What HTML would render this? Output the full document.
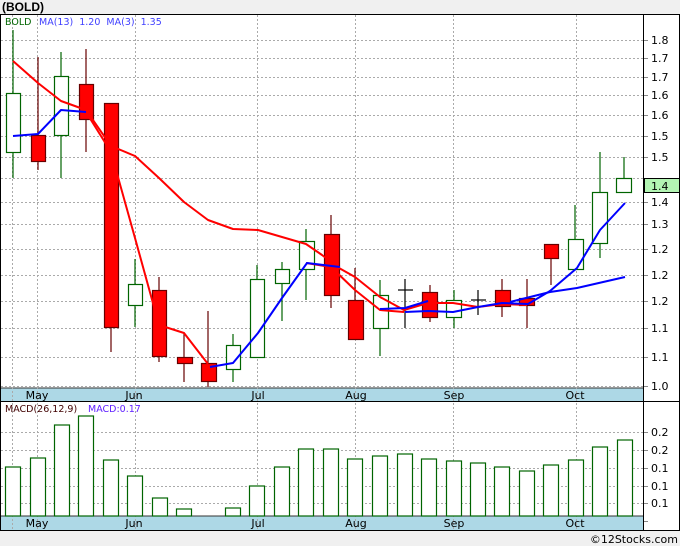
<!DOCTYPE html>
<html><head><style>
html,body{margin:0;padding:0;background:#f0f0f0;}
svg{display:block;font-family:"DejaVu Sans","Liberation Sans",sans-serif;}
</style></head><body>
<svg width="680" height="546" viewBox="0 0 680 546" xmlns="http://www.w3.org/2000/svg">
<rect x="0" y="0" width="680" height="546" fill="#f0f0f0"/>
<text x="2" y="11" font-family="Liberation Sans, sans-serif" font-weight="bold" font-size="12" fill="#000">(BOLD)</text>
<rect x="0" y="14" width="680" height="517" fill="#fff"/>
<!-- date bands -->
<rect x="1" y="388" width="642" height="13" fill="#add8e6"/>
<rect x="1" y="516" width="642" height="14" fill="#add8e6"/>
<line x1="0" y1="388" x2="643" y2="388" stroke="#333" stroke-width="1"/>
<line x1="0" y1="401.5" x2="680" y2="401.5" stroke="#000" stroke-width="1"/>
<line x1="0" y1="516" x2="643" y2="516" stroke="#333"/>
<rect x="0.5" y="14.5" width="679" height="516" fill="none" stroke="#000"/>
<line x1="643.5" y1="14" x2="643.5" y2="531" stroke="#000"/>
<!-- grid -->
<g stroke="#aaa" stroke-dasharray="2,2" stroke-width="1">
<line x1="12.5" y1="15" x2="12.5" y2="530"/>
<line x1="37.5" y1="15" x2="37.5" y2="530"/>
<line x1="135.5" y1="15" x2="135.5" y2="530"/>
<line x1="257.5" y1="15" x2="257.5" y2="530"/>
<line x1="355.5" y1="15" x2="355.5" y2="530"/>
<line x1="453.5" y1="15" x2="453.5" y2="530"/>
<line x1="576.5" y1="15" x2="576.5" y2="530"/>
<g>
<line x1="1" y1="40.5" x2="643" y2="40.5"/><line x1="1" y1="58.5" x2="643" y2="58.5"/>
<line x1="1" y1="77.5" x2="643" y2="77.5"/><line x1="1" y1="95.5" x2="643" y2="95.5"/>
<line x1="1" y1="115.5" x2="643" y2="115.5"/><line x1="1" y1="136.5" x2="643" y2="136.5"/>
<line x1="1" y1="157.5" x2="643" y2="157.5"/><line x1="1" y1="178.5" x2="643" y2="178.5"/>
<line x1="1" y1="202.5" x2="643" y2="202.5"/><line x1="1" y1="224.5" x2="643" y2="224.5"/>
<line x1="1" y1="249.5" x2="643" y2="249.5"/><line x1="1" y1="275.5" x2="643" y2="275.5"/>
<line x1="1" y1="301.5" x2="643" y2="301.5"/><line x1="1" y1="328.5" x2="643" y2="328.5"/>
<line x1="1" y1="357.5" x2="643" y2="357.5"/><line x1="1" y1="386.5" x2="643" y2="386.5"/>
<line x1="1" y1="432.5" x2="643" y2="432.5"/><line x1="1" y1="450.5" x2="643" y2="450.5"/>
<line x1="1" y1="468.5" x2="643" y2="468.5"/><line x1="1" y1="486.5" x2="643" y2="486.5"/>
<line x1="1" y1="503.5" x2="643" y2="503.5"/>
</g></g>
<!-- axis ticks -->
<g stroke="#888">
<line x1="644" y1="40.5" x2="648" y2="40.5"/><line x1="644" y1="58.5" x2="648" y2="58.5"/><line x1="644" y1="77.5" x2="648" y2="77.5"/><line x1="644" y1="95.5" x2="648" y2="95.5"/><line x1="644" y1="115.5" x2="648" y2="115.5"/><line x1="644" y1="136.5" x2="648" y2="136.5"/><line x1="644" y1="157.5" x2="648" y2="157.5"/><line x1="644" y1="202.5" x2="648" y2="202.5"/><line x1="644" y1="224.5" x2="648" y2="224.5"/><line x1="644" y1="249.5" x2="648" y2="249.5"/><line x1="644" y1="275.5" x2="648" y2="275.5"/><line x1="644" y1="301.5" x2="648" y2="301.5"/><line x1="644" y1="328.5" x2="648" y2="328.5"/><line x1="644" y1="357.5" x2="648" y2="357.5"/><line x1="644" y1="386.5" x2="648" y2="386.5"/>
<line x1="644" y1="432.5" x2="648" y2="432.5"/><line x1="644" y1="450.5" x2="648" y2="450.5"/><line x1="644" y1="468.5" x2="648" y2="468.5"/><line x1="644" y1="486.5" x2="648" y2="486.5"/><line x1="644" y1="503.5" x2="648" y2="503.5"/><line x1="644" y1="521.5" x2="648" y2="521.5"/>
</g>
<g font-size="11" fill="#000">
<text x="651" y="44">1.8</text><text x="651" y="62">1.7</text><text x="651" y="81">1.7</text><text x="651" y="99">1.6</text><text x="651" y="119">1.6</text><text x="651" y="140">1.5</text><text x="651" y="161">1.5</text><text x="651" y="206">1.4</text><text x="651" y="228">1.3</text><text x="651" y="253">1.2</text><text x="651" y="279">1.2</text><text x="651" y="305">1.2</text><text x="651" y="332">1.1</text><text x="651" y="361">1.1</text><text x="651" y="390">1.0</text>
<text x="651" y="436">0.2</text><text x="651" y="454">0.2</text><text x="651" y="472">0.1</text><text x="651" y="490">0.1</text><text x="651" y="507">0.1</text>
</g>
<rect x="644.5" y="178.5" width="35" height="14" fill="#b3f5b3" stroke="#000"/>
<text x="651" y="190" font-size="11" fill="#000">1.4</text>
<!-- month labels -->
<g font-size="11" fill="#000" text-anchor="middle">
<text x="37" y="399">May</text><text x="134" y="399">Jun</text><text x="258" y="399">Jul</text><text x="356" y="399">Aug</text><text x="454" y="399">Sep</text><text x="575" y="399">Oct</text>
<text x="37" y="527">May</text><text x="134" y="527">Jun</text><text x="258" y="527">Jul</text><text x="356" y="527">Aug</text><text x="454" y="527">Sep</text><text x="575" y="527">Oct</text>
</g>
<g font-size="9.5">
<text x="5" y="25" fill="#006400">BOLD</text>
<text x="39" y="25" fill="#4040ff">MA(13)&#160; 1.20&#160; MA(3)&#160; 1.35</text>
<text x="5" y="412" fill="#400000">MACD(26,12,9)</text>
<text x="88" y="412" fill="#6020ff">MACD:0.17</text>
</g>
<!-- candles -->
<g stroke-width="1.2">
<g stroke="#006400" fill="#fff">
<line x1="13" y1="30" x2="13" y2="178"/><rect x="6.5" y="93.5" width="14" height="59"/>
<line x1="61" y1="52" x2="61" y2="178"/><rect x="54.5" y="76.5" width="14" height="59"/>
<line x1="135" y1="259" x2="135" y2="327"/><rect x="128.5" y="284.5" width="14" height="21"/>
<line x1="233" y1="334" x2="233" y2="382"/><rect x="226.5" y="345.5" width="14" height="24"/>
<line x1="257" y1="265" x2="257" y2="357"/><rect x="250.5" y="279.5" width="14" height="78"/>
<line x1="282" y1="262" x2="282" y2="321"/><rect x="275.5" y="269.5" width="14" height="14"/>
<line x1="306" y1="229" x2="306" y2="300"/><rect x="299.5" y="241.5" width="15" height="28"/>
<line x1="380" y1="280" x2="380" y2="356"/><rect x="373.5" y="295.5" width="15" height="33"/>
<line x1="454" y1="290" x2="454" y2="328"/><rect x="446.5" y="300.5" width="15" height="17"/>
<line x1="575" y1="205" x2="575" y2="269"/><rect x="568.5" y="239.5" width="15" height="30"/>
<line x1="600" y1="152" x2="600" y2="258"/><rect x="592.5" y="192.5" width="15" height="51"/>
<line x1="624" y1="157" x2="624" y2="192"/><rect x="616.5" y="178.5" width="15" height="14"/>
</g>
<g stroke="#000">
<line x1="405" y1="279" x2="405" y2="328"/><line x1="398" y1="290" x2="413" y2="290"/>
<line x1="478" y1="290" x2="478" y2="315"/><line x1="471" y1="300" x2="486" y2="300"/>
</g>
<g stroke="#600" fill="#f00">
<line x1="38" y1="57" x2="38" y2="170"/><rect x="31.5" y="135.5" width="14" height="26"/>
<line x1="86" y1="49" x2="86" y2="152"/><rect x="79.5" y="84.5" width="14" height="35"/>
<line x1="111" y1="103" x2="111" y2="352"/><rect x="104.5" y="103.5" width="14" height="224"/>
<line x1="159" y1="277" x2="159" y2="362"/><rect x="152.5" y="290.5" width="14" height="66"/>
<line x1="184" y1="333" x2="184" y2="382"/><rect x="177.5" y="357.5" width="15" height="6"/>
<line x1="208" y1="311" x2="208" y2="387"/><rect x="201.5" y="363.5" width="15" height="18"/>
<line x1="331" y1="215" x2="331" y2="308"/><rect x="324.5" y="234.5" width="15" height="61"/>
<line x1="355" y1="268" x2="355" y2="339"/><rect x="348.5" y="300.5" width="15" height="39"/>
<line x1="430" y1="285" x2="430" y2="322"/><rect x="422.5" y="292.5" width="15" height="25"/>
<line x1="502" y1="279" x2="502" y2="317"/><rect x="495.5" y="290.5" width="15" height="16"/>
<line x1="527" y1="279" x2="527" y2="328"/><rect x="519.5" y="298.5" width="15" height="7"/>
<line x1="551" y1="244" x2="551" y2="285"/><rect x="544.5" y="244.5" width="14" height="14"/>
</g>
</g>
<!-- MA lines -->
<g fill="none" stroke-width="2" stroke-linejoin="round">
<polyline stroke="#f00" points="13,61 38,83 61,101 86,110 111,146 135,156 159,178 184,202 208,220 233,229 258,230 306,244 322,255 339,268 355,277 380,297 404,310 428,303 453,303 478,307 502,304 527,305"/>
<polyline stroke="#f00" points="86,112 111,152 135,238 159,325 184,333 208,364"/>
<polyline stroke="#f00" points="306,263 331,267 355,290 380,310 404,312"/>
<polyline stroke="#00f" points="13,136 38,134 61,110 86,112"/>
<polyline stroke="#00f" points="210,367 233,363 258,333 282,298 307,263 340,267"/>
<polyline stroke="#00f" points="380,309 405,308 428,301"/>
<polyline stroke="#00f" points="405,312 428,311 453,312 478,307 502,303 528,304 550,291 577,268 600,230 625,203"/>
<polyline stroke="#00f" points="510,302 550,292 577,288 625,277"/>
</g>
<!-- MACD bars -->
<g fill="#fff" stroke="#006400" stroke-width="1.2">
<rect x="5.5" y="467" width="15" height="49"/>
<rect x="30.5" y="458" width="15" height="58"/>
<rect x="54.5" y="425" width="15" height="91"/>
<rect x="78.5" y="416" width="15" height="100"/>
<rect x="103.5" y="460" width="15" height="56"/>
<rect x="127.5" y="476" width="15" height="40"/>
<rect x="152.5" y="498" width="15" height="18"/>
<rect x="176.5" y="509" width="15" height="7"/>
<rect x="225.5" y="508" width="15" height="8"/>
<rect x="249.5" y="486" width="15" height="30"/>
<rect x="274.5" y="467" width="15" height="49"/>
<rect x="298.5" y="449" width="15" height="67"/>
<rect x="323.5" y="449" width="15" height="67"/>
<rect x="347.5" y="459" width="15" height="57"/>
<rect x="372.5" y="456" width="15" height="60"/>
<rect x="397.5" y="454" width="15" height="62"/>
<rect x="421.5" y="459" width="15" height="57"/>
<rect x="446.5" y="461" width="15" height="55"/>
<rect x="470.5" y="463" width="15" height="53"/>
<rect x="494.5" y="467" width="15" height="49"/>
<rect x="519.5" y="471" width="15" height="45"/>
<rect x="543.5" y="465" width="15" height="51"/>
<rect x="568.5" y="460" width="15" height="56"/>
<rect x="592.5" y="447" width="15" height="69"/>
<rect x="617.5" y="440" width="15" height="76"/>
</g>
<text x="678" y="543" font-size="11" fill="#000" text-anchor="end">©12Stocks.com</text>
</svg>
</body></html>
